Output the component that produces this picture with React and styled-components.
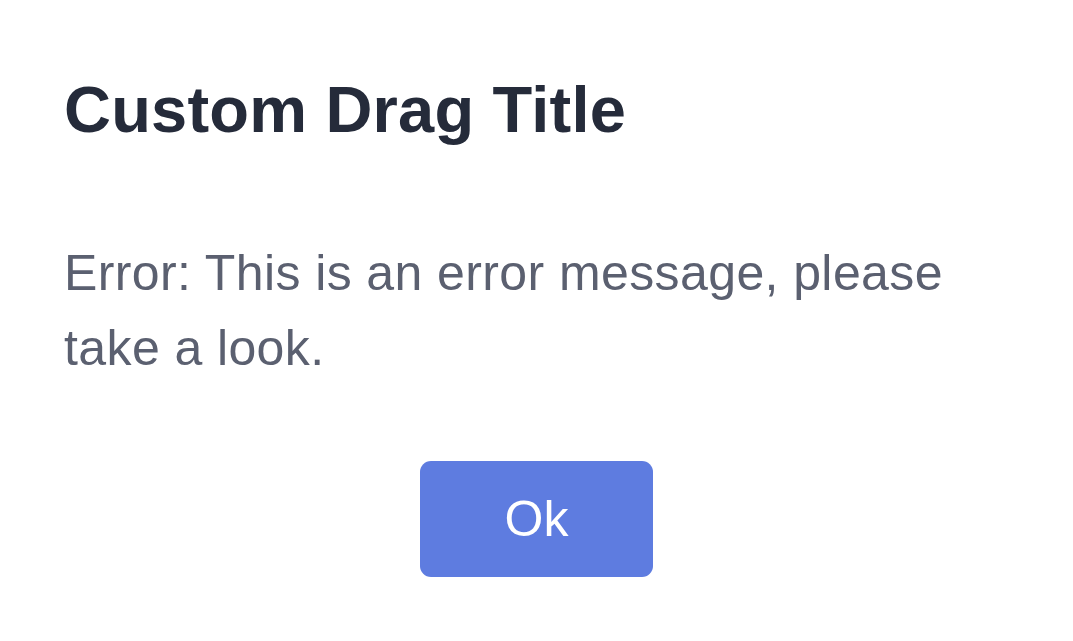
import React from "react";
import styled, { createGlobalStyle } from "styled-components";

const Global = createGlobalStyle`
  html, body { margin: 0; padding: 0; background: #ffffff; }
  body { font-family: "Liberation Sans", Arial, sans-serif; }
`;

const Dialog = styled.div`
  box-sizing: border-box;
  width: 1073px;
  min-height: 641px;
  padding: 65px 64px 0 64px;
  display: flex;
  flex-direction: column;
  background: #ffffff;
`;

const Title = styled.h1`
  margin: 0;
  font-size: 65px;
  line-height: 90px;
  font-weight: 700;
  letter-spacing: 0.2px;
  color: #252b3a;
`;

const Message = styled.p`
  margin: 81px 0 0 0;
  font-size: 50px;
  line-height: 75px;
  letter-spacing: 0.4px;
  color: #5b6070;
`;

const Footer = styled.div`
  display: flex;
  justify-content: center;
  margin-top: 75px;
`;

const Button = styled.button`
  width: 233px;
  height: 116px;
  border: none;
  border-radius: 11px;
  background: #5e7ce0;
  color: #ffffff;
  font-family: "Liberation Sans", Arial, sans-serif;
  font-size: 50px;
  padding: 0;
  cursor: pointer;
`;

export default function App() {
  return (
    <>
      <Global />
      <Dialog>
        <Title>Custom Drag Title</Title>
        <Message>Error: This is an error message, please take a look.</Message>
        <Footer>
          <Button>Ok</Button>
        </Footer>
      </Dialog>
    </>
  );
}
